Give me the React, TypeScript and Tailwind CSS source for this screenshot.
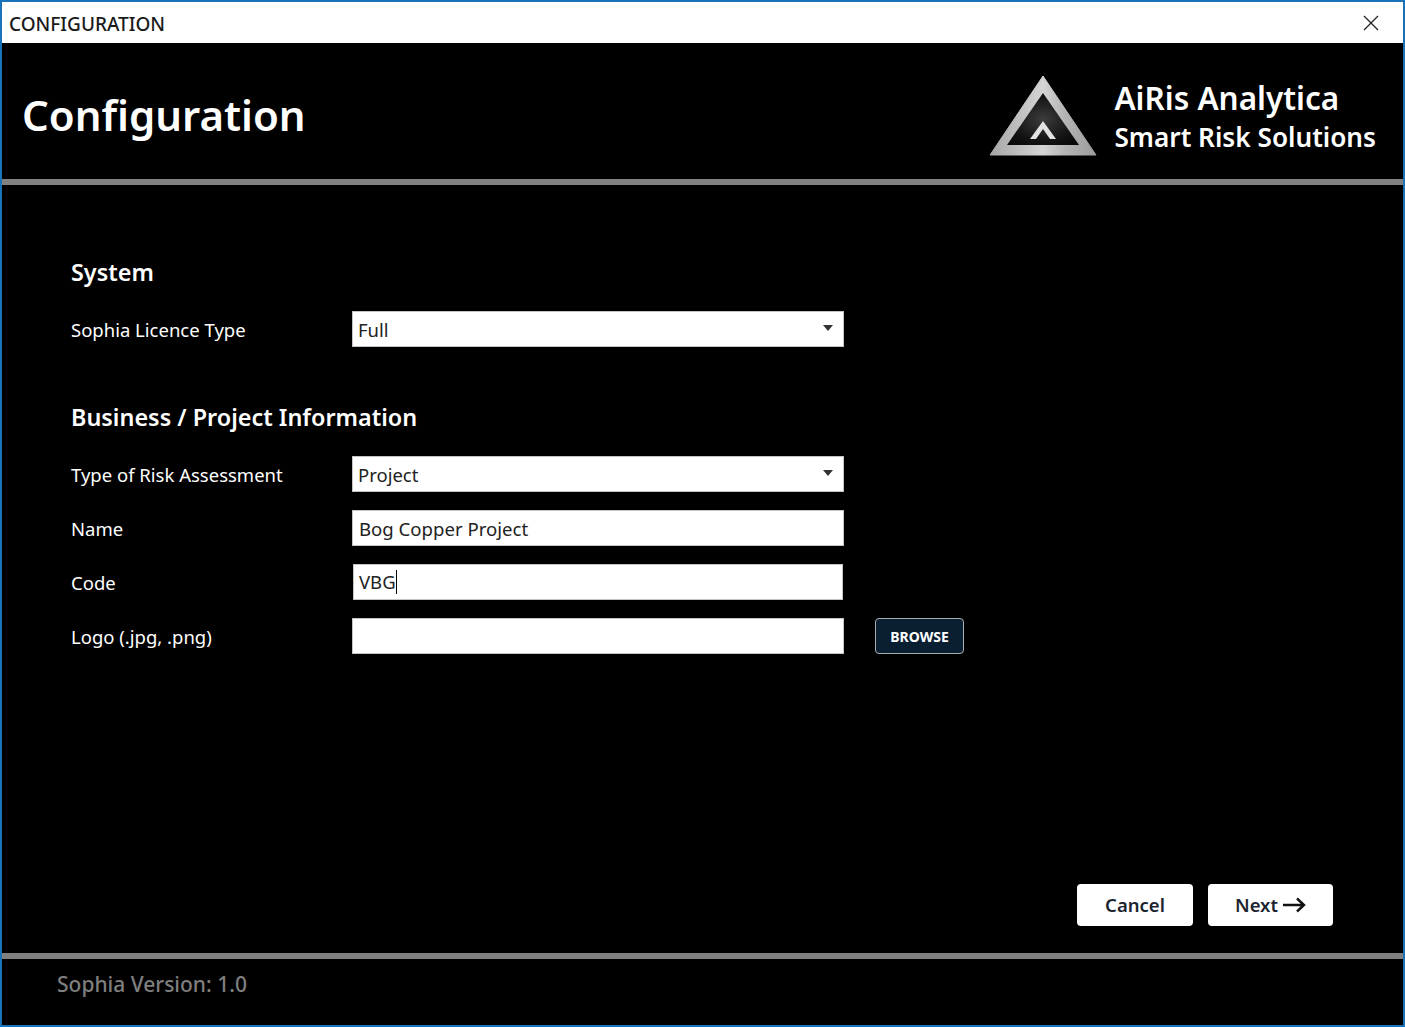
function Caret() {
    return (
        <svg width="10" height="6" viewBox="0 0 10 6" className="absolute right-[10px] top-[13px]">
            <path d="M0 0H10L5 6Z" fill="#333" />
        </svg>
    )
}

function Logo() {
    return (
        <svg width="108" height="82" viewBox="0 0 108 82" className="shrink-0">
            <defs>
                <linearGradient id="rim" x1="0" y1="0" x2="1" y2="0">
                    <stop offset="0" stopColor="#a6a6a6" />
                    <stop offset="0.5" stopColor="#d4d4d4" />
                    <stop offset="0.7" stopColor="#b5b5b5" />
                    <stop offset="1" stopColor="#9c9c9c" />
                </linearGradient>
                <radialGradient id="core" cx="0.5" cy="0.5" r="0.6">
                    <stop offset="0" stopColor="#3c3c3c" />
                    <stop offset="0.7" stopColor="#141414" />
                    <stop offset="1" stopColor="#0a0a0a" />
                </radialGradient>
            </defs>
            <path d="M54 1L107 80H1Z" fill="url(#rim)" stroke="url(#rim)" strokeLinejoin="round" />
            <path d="M54 18L90 70H18Z" fill="url(#core)" />
            <path d="M41 64L54 46L67 64H61L54 54L47 64Z" fill="#e2e2e2" />
        </svg>
    )
}

function Field({ label, children }: { label: string; children: React.ReactNode }) {
    return (
        <div className="flex items-center">
            <p className="mt-[2px] w-[281px] text-[18.5px] text-white">{label}</p>
            {children}
        </div>
    )
}

function Select({ value }: { value: string }) {
    return (
        <div className="relative h-9 w-[492px] border border-[#c4c4c4] bg-white pl-[5px] text-[18.5px] leading-9 text-[#222]">
            {value}
            <Caret />
        </div>
    )
}

export default function App() {
    return (
        <div className="flex h-[1027px] w-[1405px] flex-col border-2 border-t-2 border-[#1a73b8] bg-black font-['Noto_Sans','Open_Sans',sans-serif]">
            <div className="flex h-[41px] shrink-0 items-center justify-between bg-white pl-[7px] pr-[24px]">
                <p className="mt-[3px] text-[19px] font-medium text-[#1a1a1a]">CONFIGURATION</p>
                <svg width="16" height="16" viewBox="0 0 16 16">
                    <path d="M1 1L15 15M15 1L1 15" stroke="#222" strokeWidth="1.3" />
                </svg>
            </div>

            <div className="flex h-[136px] shrink-0 items-center justify-between pl-[20px] pr-[27px] pt-[9px]">
                <h1 className="mb-[3px] text-[42px] font-semibold text-white">Configuration</h1>
                <div className="flex items-center gap-[17px]">
                    <Logo />
                    <div className="text-white">
                        <p className="text-[31.5px] leading-[42px] font-semibold">AiRis Analytica</p>
                        <p className="text-[26.2px] leading-[36px] font-semibold">Smart Risk Solutions</p>
                    </div>
                </div>
            </div>
            <div className="h-[6px] shrink-0 bg-[#808080]" />

            <div className="flex flex-1 flex-col pl-[69px] pr-[69px]">
                <h2 className="mt-[69px] text-[23.4px] leading-9 font-semibold text-white">System</h2>
                <div className="mt-[21px]">
                    <Field label="Sophia Licence Type">
                        <Select value="Full" />
                    </Field>
                </div>
                <h2 className="mt-[52px] text-[23.4px] leading-9 font-semibold text-white">Business / Project Information</h2>
                <div className="mt-[21px] flex flex-col gap-[18px]">
                    <Field label="Type of Risk Assessment">
                        <Select value="Project" />
                    </Field>
                    <Field label="Name">
                        <input readOnly defaultValue="Bog Copper Project" className="h-9 w-[492px] border border-[#c4c4c4] bg-white pl-[6px] text-[18.6px] text-[#222] outline-none" />
                    </Field>
                    <Field label="Code">
                        <div className="ml-px flex h-9 w-[490px] items-center border border-[#c4c4c4] bg-white pl-[5px] text-[18.5px] text-[#222]">
                            VBG<span className="h-6 w-px bg-black" />
                        </div>
                    </Field>
                    <Field label="Logo (.jpg, .png)">
                        <input readOnly className="h-9 w-[492px] border border-[#c4c4c4] bg-white outline-none" />
                        <button className="ml-[31px] h-9 w-[89px] rounded-[4px] border-[1.5px] border-[#a8adb2] bg-[#0b1f33] text-[14px] font-bold text-white">BROWSE</button>
                    </Field>
                </div>
                <div className="mt-auto mb-[27px] flex justify-end gap-[15px] pr-px">
                    <button className="h-[42px] w-[116px] rounded-[4px] bg-white text-[18.5px] font-semibold text-[#1c2430]">Cancel</button>
                    <button className="flex h-[42px] w-[125px] items-center justify-center gap-[4px] rounded-[4px] bg-white text-[18.5px] font-semibold text-[#1c2430]">
                        Next
                        <svg width="24" height="16" viewBox="0 0 24 16">
                            <path d="M1 8H22M15 1.5L22 8L15 14.5" fill="none" stroke="#111" strokeWidth="2.4" />
                        </svg>
                    </button>
                </div>
            </div>

            <div className="h-[6px] shrink-0 bg-[#808080]" />
            <div className="flex h-[66px] shrink-0 items-start pl-[55px] pt-[10px]">
                <p className="text-[21px] font-medium text-[#7f7f7f]">Sophia Version: 1.0</p>
            </div>
        </div>
    )
}
